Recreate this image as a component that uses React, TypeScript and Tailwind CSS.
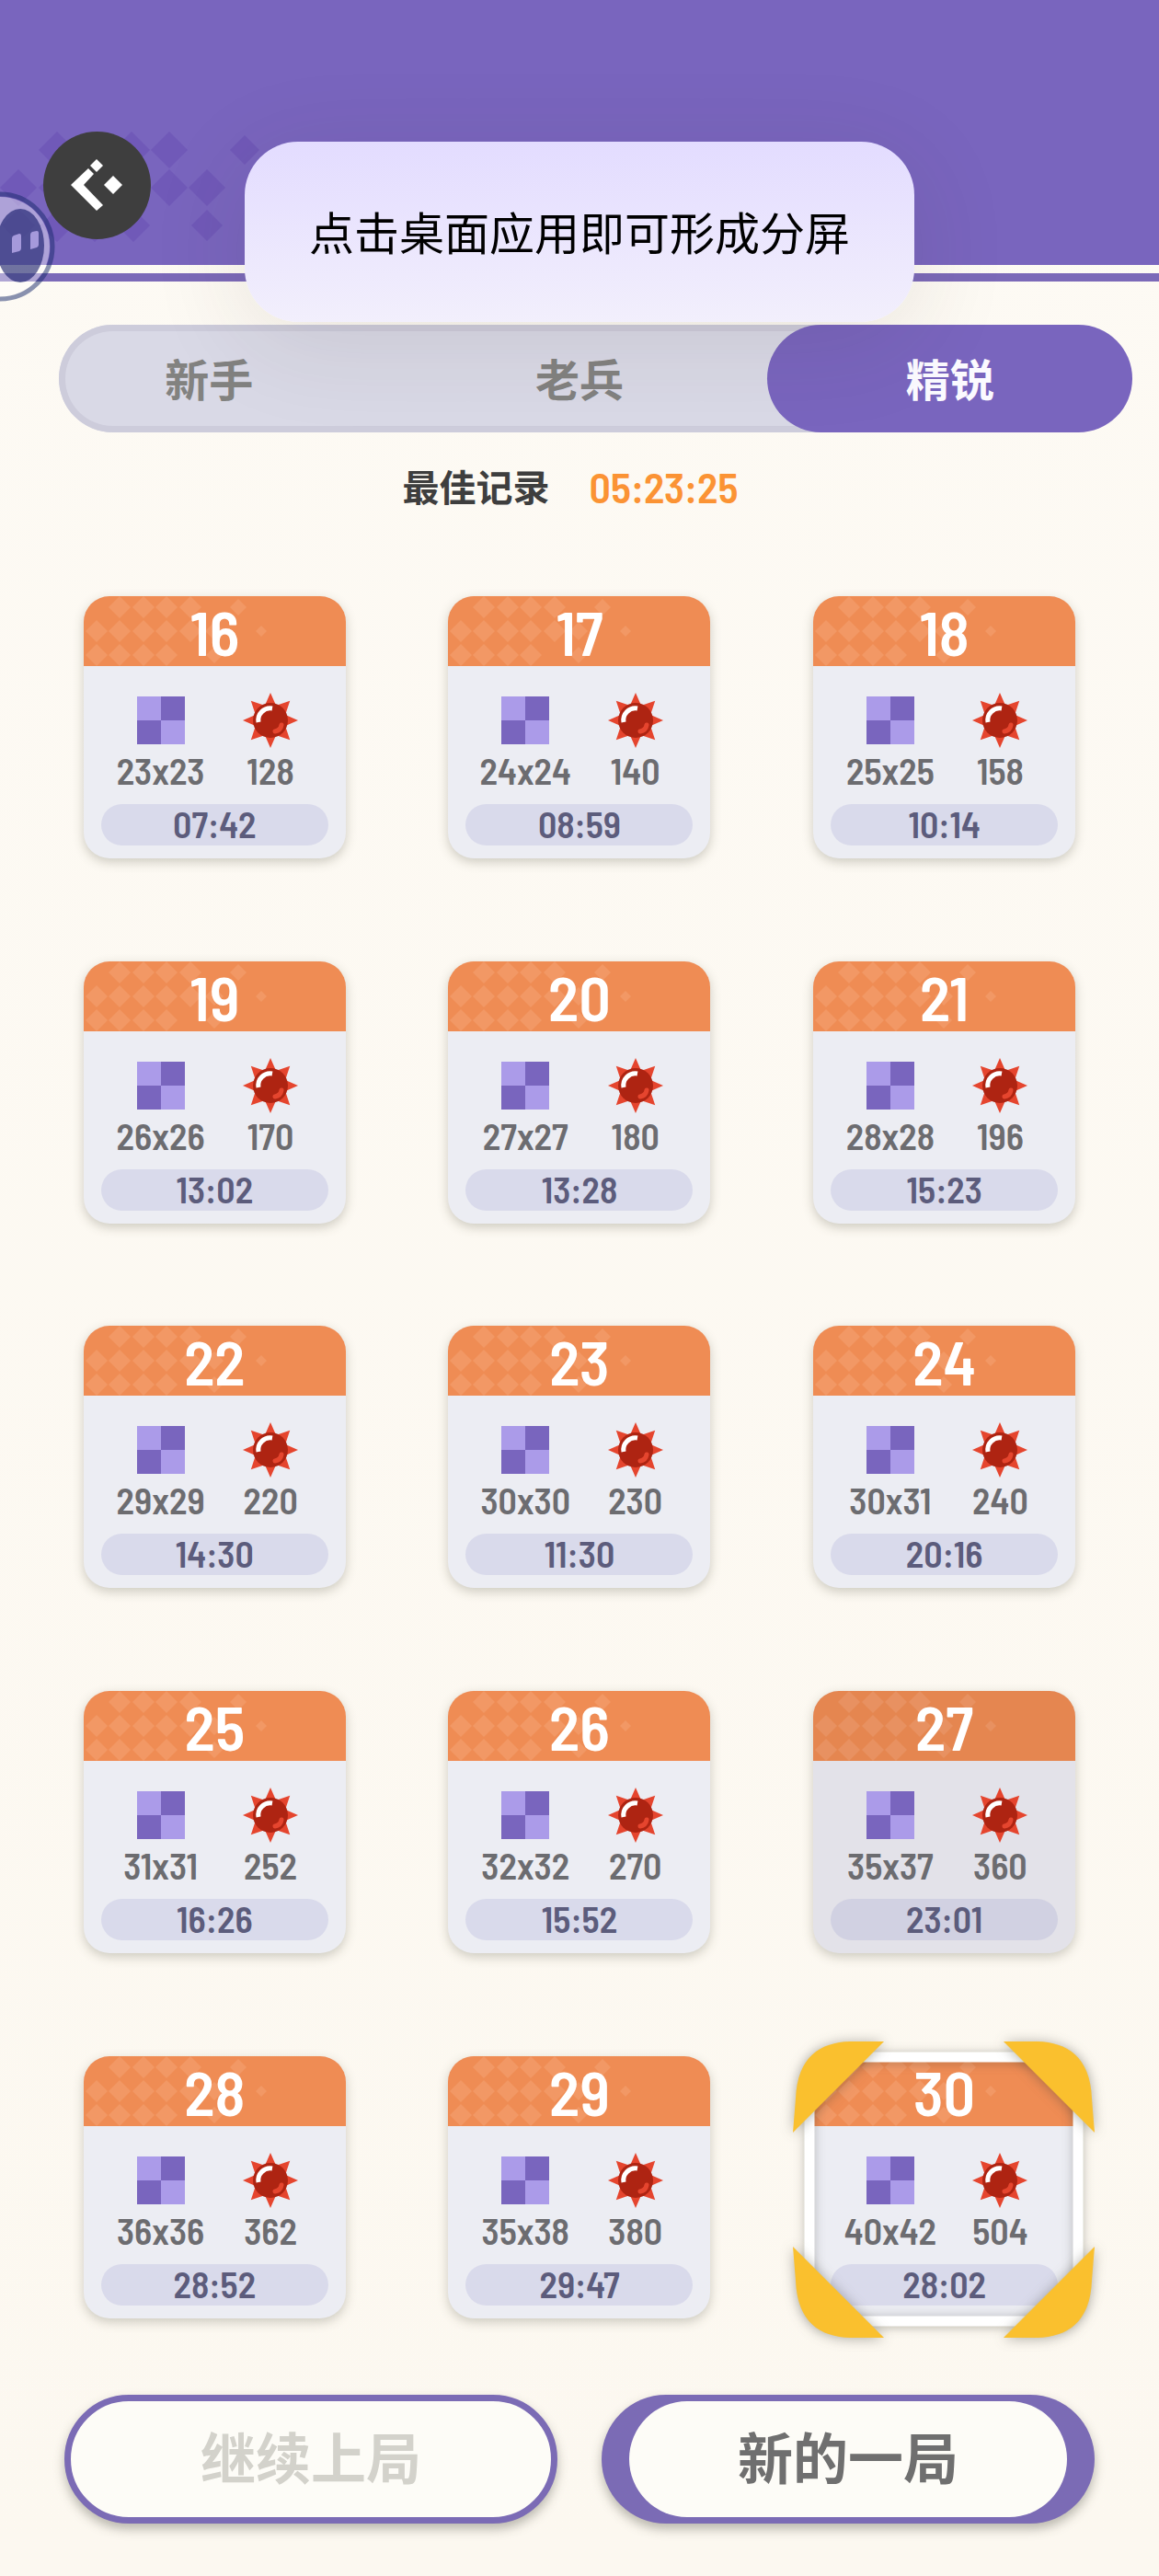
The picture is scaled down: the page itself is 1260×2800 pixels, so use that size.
import React from 'react';

interface Level {
  id: number;
  size: string;
  mines: number;
  time: string;
  pressed?: boolean;
  selected?: boolean;
}

const levels: Level[] = [
  { id: 16, size: '23x23', mines: 128, time: '07:42' },
  { id: 17, size: '24x24', mines: 140, time: '08:59' },
  { id: 18, size: '25x25', mines: 158, time: '10:14' },
  { id: 19, size: '26x26', mines: 170, time: '13:02' },
  { id: 20, size: '27x27', mines: 180, time: '13:28' },
  { id: 21, size: '28x28', mines: 196, time: '15:23' },
  { id: 22, size: '29x29', mines: 220, time: '14:30' },
  { id: 23, size: '30x30', mines: 230, time: '11:30' },
  { id: 24, size: '30x31', mines: 240, time: '20:16' },
  { id: 25, size: '31x31', mines: 252, time: '16:26' },
  { id: 26, size: '32x32', mines: 270, time: '15:52' },
  { id: 27, size: '35x37', mines: 360, time: '23:01', pressed: true },
  { id: 28, size: '36x36', mines: 362, time: '28:52' },
  { id: 29, size: '35x38', mines: 380, time: '29:47' },
  { id: 30, size: '40x42', mines: 504, time: '28:02', selected: true },
];

const tabs = [
  { id: 'rookie', label: '新手' },
  { id: 'veteran', label: '老兵' },
  { id: 'elite', label: '精锐' },
];

const numberFont = "font-['Barlow_Semi_Condensed','Roboto_Condensed',Roboto,sans-serif]";

// x, y, half diagonal
const headerDiamonds = [
  [62, 23, 20], [143, 23, 20], [184, 23, 20], [266, 23, 16],
  [20, 64, 20], [62, 64, 20], [184, 64, 20], [225, 64, 20],
  [20, 105, 18], [62, 105, 18], [103, 105, 18], [145, 105, 18], [225, 105, 17],
];

const cardDiamonds = [
  [39, 12, 12], [65, 12, 12], [90, 12, 12], [116, 12, 12], [168, 12, 9],
  [14, 38, 12], [39, 38, 12], [65, 38, 12], [90, 38, 12], [116, 38, 12], [142, 38, 10], [193, 38, 6],
  [14, 64, 12], [39, 64, 12], [65, 64, 12], [90, 64, 12], [142, 64, 9],
];

const Diamonds = ({ items }: { items: number[][] }) => (
  <>
    {items.map(([x, y, r]) => (
      <path key={`${x}-${y}`} d={`M${x} ${y - r}L${x + r} ${y}L${x} ${y + r}L${x - r} ${y}Z`} />
    ))}
  </>
);

const BoardIcon = () => (
  <svg className="w-[52px] h-[52px]" viewBox="0 0 52 52" shapeRendering="crispEdges" aria-hidden="true">
    <rect width="52" height="52" fill="#ab9be9" />
    <rect x="26" width="26" height="26" fill="#7965be" />
    <rect y="26" width="26" height="26" fill="#7965be" />
  </svg>
);

const MineIcon = () => (
  <svg className="w-[60px] h-[60px]" viewBox="-30 -30 60 60" aria-hidden="true">
    <g fill="#e5452e">
      {[0, 90, 180, 270].map((a) => (
        <React.Fragment key={a}>
          <path d="M0 -30L7 -14H-7Z" transform={`rotate(${a})`} />
          <path d="M0 -30L8 -14H-8Z" transform={`rotate(${a + 45})`} />
        </React.Fragment>
      ))}
    </g>
    <circle r="19" fill="#ae2412" />
    <path d="M-13 2A13 13 0 0 1 2 -13" fill="none" stroke="#fff" strokeWidth="5" />
    <path d="M5 12Q11 11 12 5" fill="none" stroke="#e5452e" strokeWidth="5" strokeLinecap="round" />
  </svg>
);

const BackIcon = () => (
  <svg className="w-[58px] h-[58px]" viewBox="0 0 58 58" fill="#fff" aria-hidden="true">
    <path d="M19 10L25 16L14 28L35 50L28 56L0 28Z" />
    <path d="M28 0L35 7L28 14L21 7Z" />
    <path d="M46 18L56 28L46 38L36 28Z" />
  </svg>
);

const Assistant = () => (
  <svg className="absolute left-0 top-[208px] w-[62px] h-[122px]" viewBox="0 0 62 122" aria-hidden="true">
    <circle cx="0" cy="60" r="54" fill="#fff" fillOpacity="0.4" />
    <circle cx="0" cy="60" r="57" fill="none" stroke="#16286a" strokeOpacity="0.5" strokeWidth="5" />
    <ellipse cx="22" cy="59" rx="26" ry="40" fill="#080f60" fillOpacity="0.58" />
    <path d="M13 51Q13 49 15 48L21 46Q23 46 23 48V62Q23 64 21 65L13 67Z" fill="#a599db" />
    <path d="M33 47Q33 45 35 44L40 43Q42 43 42 45V58Q42 60 40 61L33 63Z" fill="#a599db" />
  </svg>
);

const corner = 'M99 0L62 0C30 1 5 16 3 62L0 99Z';

const SelectionFrame = () => (
  <svg className="absolute -left-[22px] -top-4 w-[328px] h-[322px] overflow-visible" viewBox="0 0 328 322" aria-hidden="true">
    <g style={{ filter: 'drop-shadow(0 1px 6px rgba(60,60,50,.3))' }}>
      <rect x="18" y="17" width="292" height="287" rx="26" fill="none" stroke="#fff" strokeWidth="11" />
    </g>
    <g fill="#fac02e" style={{ filter: 'drop-shadow(0 1px 7px rgba(60,60,50,.4))' }}>
      <path d={corner} />
      <path d={corner} transform="matrix(-1 0 0 1 328 0)" />
      <path d={corner} transform="matrix(1 0 0 -1 0 322)" />
      <path d={corner} transform="matrix(-1 0 0 -1 328 322)" />
    </g>
  </svg>
);

const LevelCard = ({ level }: { level: Level }) => (
  <button className={`relative w-[285px] font-semibold text-center cursor-pointer ${numberFont}`}>
    <span className={`flow-root rounded-[28px] shadow-[0_4px_12px_rgba(70,70,50,0.26)] ${level.pressed ? 'bg-[#e3e2e9]' : 'bg-[#ecedf3]'}`}>
      <span className={`relative block h-[76px] rounded-t-[28px] ${level.pressed ? 'bg-[#e58650]' : 'bg-[#ef8c54]'}`}>
        <svg className="absolute inset-0 w-full h-full" fill={level.pressed ? '#e89161' : '#f29865'} aria-hidden="true">
          <Diamonds items={cardDiamonds} />
        </svg>
        <span className="relative block text-[68px] leading-[76px] text-white">{level.id}</span>
      </span>
      <span className="flex pl-6 pr-[22px] pt-[26px] text-[40px] leading-[42px] text-[#6c6c70]">
        <span className="flex-1 flex flex-col items-center">
          <span className="h-[66px] flex items-center"><BoardIcon /></span>
          {level.size}
        </span>
        <span className="flex-1 flex flex-col items-center">
          <span className="h-[66px] flex items-center"><MineIcon /></span>
          {level.mines}
        </span>
      </span>
      <span className={`block mt-4 mx-[19px] mb-[14px] pb-[2px] rounded-full text-[40px] leading-[43px] text-[#5c5c7c] ${level.pressed ? 'bg-[#d1d1e2]' : 'bg-[#d9daeb]'}`}>
        {level.time}
      </span>
    </span>
    {level.selected && <SelectionFrame />}
  </button>
);

export default function App() {
  const [activeTab, setActiveTab] = React.useState('elite');

  return (
    <div className="relative min-h-screen overflow-hidden bg-linear-to-b from-[#fdfaf4] to-[#fcf8f0] font-['Noto_Sans_CJK_SC',sans-serif]">
      {/* Header */}
      <header className="border-b-[9px] border-[#7b69b8]">
        <div className="relative h-[288px] bg-[#7965be] pt-[143px] pl-[47px]">
          <svg className="absolute left-0 top-[140px] w-[300px] h-[130px]" fill="#7059b8" aria-hidden="true">
            <Diamonds items={headerDiamonds} />
          </svg>
          <button aria-label="返回" className="relative w-[117px] h-[117px] rounded-full bg-[#3e3e3e] flex items-center justify-center">
            <BackIcon />
          </button>
        </div>
        <div className="h-[9px]" />
      </header>
      <Assistant />

      {/* Difficulty tabs */}
      <nav className="mt-[47px] mx-16 h-[117px] rounded-full bg-[#d9d9e6] shadow-[inset_0_0_0_7px_#cdccdb]">
        <div className="-mx-[38px] h-full grid grid-cols-3">
          {tabs.map((tab) => (
            <button
              key={tab.id}
              onClick={() => setActiveTab(tab.id)}
              className={`mx-[3px] pb-1 rounded-full text-5xl font-bold ${
                activeTab === tab.id ? 'bg-[#7965be] text-[#fbfaff]' : 'text-[#828280]'
              }`}
            >
              {tab.label}
            </button>
          ))}
        </div>
      </nav>

      <div className="mt-7 mb-[34px] h-[60px] flex items-center justify-center gap-[43px] pr-5">
        <span className="text-[40px] font-bold text-[#3e3e3e]">最佳记录</span>
        <span className={`text-[46px] font-semibold text-[#fb9334] ${numberFont}`}>05:23:25</span>
      </div>

      {/* Levels */}
      <main className="mx-[35px] grid grid-cols-3">
        {levels.map((level) => (
          <div key={level.id} className="aspect-square flex items-center justify-center">
            <LevelCard level={level} />
          </div>
        ))}
      </main>

      <footer className="mt-7 px-[70px] pb-14 grid grid-cols-2 gap-12 text-[60px] font-bold">
        <button disabled className="h-[140px] pb-2 rounded-full border-[7px] border-[#7b6bb5] bg-[#fdfcf7] text-[#d3d2cb] shadow-[0_6px_12px_rgba(60,60,50,0.35)]">
          继续上局
        </button>
        <button className="h-[140px] rounded-full bg-[#7b6bb5] px-[30px] py-[7px] text-[#6f6f6f] shadow-[0_6px_12px_rgba(60,60,50,0.35)]">
          <span className="h-full pb-2 rounded-full bg-[#fdfcf7] flex items-center justify-center">新的一局</span>
        </button>
      </footer>

      {/* Split screen hint */}
      <div role="status" className="absolute top-[154px] left-1/2 -translate-x-1/2 w-[728px] h-[196px] pb-[2px] rounded-[58px] bg-linear-to-b from-[#e3dcff] to-[#f2effc] shadow-[0_20px_110px_rgba(60,50,40,0.11)] flex items-center justify-center text-[49px] text-black">
        点击桌面应用即可形成分屏
      </div>
    </div>
  );
}
